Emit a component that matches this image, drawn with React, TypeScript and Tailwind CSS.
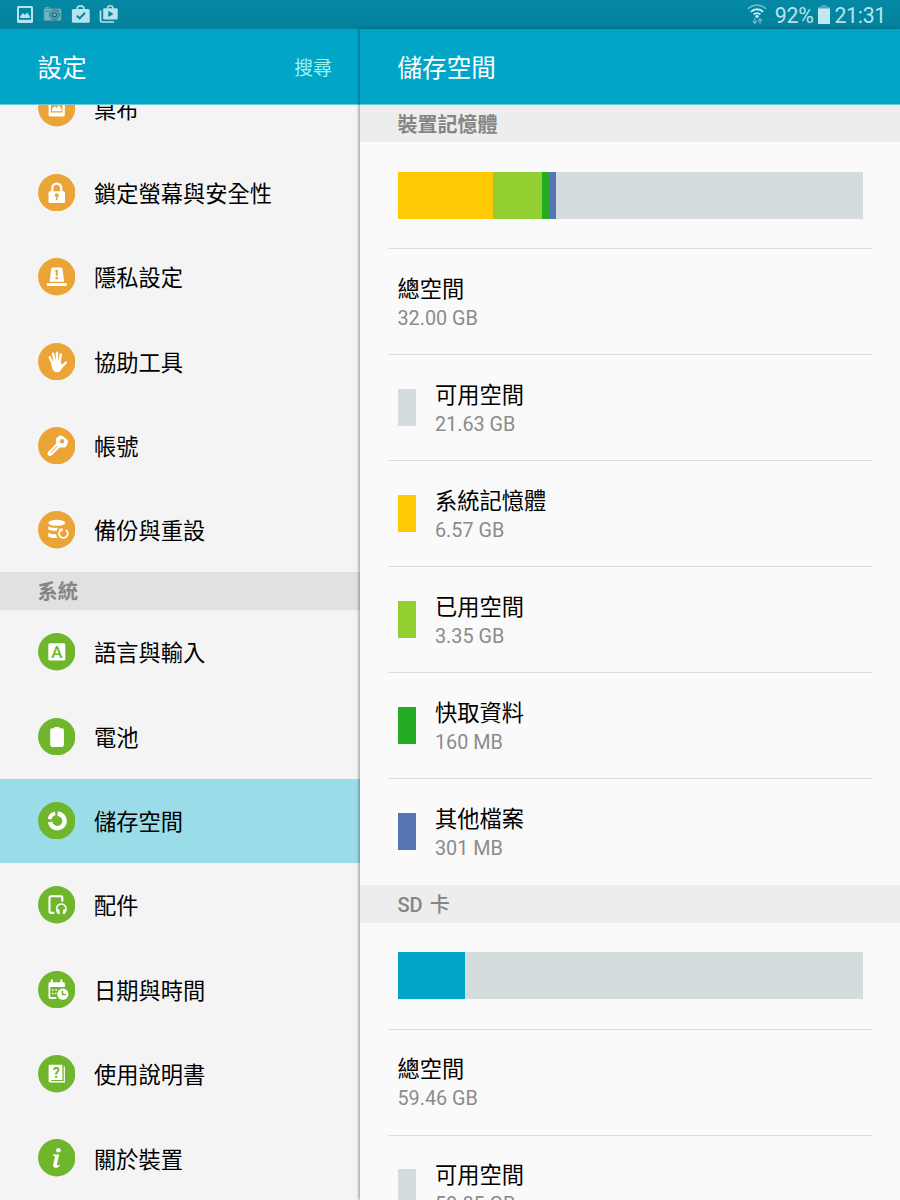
import React from "react";

interface MenuItem {
  label: string;
  icon: React.ReactNode;
  active?: boolean;
}

interface StorageItem {
  label: string;
  size: string;
  color?: string;
}

const PhotoIcon = () => (
  <>
    <path
      fillRule="evenodd"
      fill="#fff"
      d="M12 9.5h13.4a1.4 1.4 0 0 1 1.4 1.4v15.2a1.4 1.4 0 0 1-1.4 1.4H12a1.4 1.4 0 0 1-1.4-1.4V10.9a1.4 1.4 0 0 1 1.4-1.4zM12.9 11.7v11.8h11.6V11.7z"
    />
    <path fill="#fff" d="M14 22.3v-2l2.7-3.3 2 2.2 2-3.2 2.8 4v2.3z" />
  </>
);

const LockIcon = () => (
  <>
    <path d="M14.3 18v-4a4.45 4.45 0 0 1 8.9 0v4" fill="none" stroke="#fff" strokeWidth="2.3" />
    <rect x="10.5" y="17.3" width="16.5" height="11.7" rx="1.5" fill="#fff" />
    <circle cx="18.75" cy="21.3" r="2" fill="#eba536" />
    <path d="M18 22h1.5v4.3H18z" fill="#eba536" />
  </>
);

const AlarmIcon = () => (
  <>
    <path d="M11.6 23.7l1.5-12.3a2 2 0 0 1 2-1.9h7.5a2 2 0 0 1 2 1.900l1.500 12.300z" fill="#fff" />
    <rect x="8.900" y="25" width="19.900" height="2.900" rx=".6" fill="#fff" />
    <path d="M17.300 11.700h2.900l-.7 6.400h-1.500z" fill="#eba536" />
    <circle cx="18.750" cy="20.200" r="1.400" fill="#eba536" />
  </>
);

const HandIcon = () => (
  <>
    <path
      d="M11.700 14.300l3.300 7M15 10.600l2 9M19 9.700v9M22.800 11.400l-1.600 9M27.900 19.500l-4.400 4.500"
      stroke="#fff"
      strokeWidth="2.400"
      strokeLinecap="round"
    />
    <path d="M13.500 18.500l9-1.500 1.300 4.800 1.500 1.200-2.300 3.900c-1.300 2.200-3.700 2.800-5.700 2-2.200-.9-3-3.200-3.800-5.900z" fill="#fff" />
  </>
);

const KeyIcon = () => (
  <>
    <path
      d="M19.300 10.200l2.500-1.500c1-.4 2.100-.2 3 .4l4 3.300c1.300 1.200 1.400 2.400.9 3.600l-1.300 2.900c-.6 1-1.500 1.500-2.700 1.500l-4 .2-7.800 7.700c-1.200 1.100-2.700 1-3.700 0s-1-2.300 0-3.500l7.600-7.800.2-4.100c.1-1.200.4-2.100 1.300-2.700z"
      fill="#fff"
    />
    <circle cx="24.100" cy="14.300" r="2.200" fill="#eba536" />
    <path d="M12.700 25.700l6.400-6.400" stroke="#eba536" strokeWidth="1" strokeLinecap="round" />
  </>
);

const BackupIcon = () => (
  <>
    <ellipse cx="18.750" cy="11.800" rx="8.500" ry="3" fill="#fff" />
    <path d="M10.300 15.200c2.500 1.600 6 1.800 9.900 1.600-.7.700-1.200 1.600-1.500 2.900-3.500 0-6.400-.3-8.400-1.300z" fill="#fff" />
    <path d="M10.300 21.700c2.300 1.200 5 1.500 7.700 1.500.2 1.500.7 2.700 1.600 3.800-3.600.2-7-.1-9.300-1.500z" fill="#fff" />
    <path d="M22.900 18.900a4.400 4.400 0 1 0 4.900 0" fill="none" stroke="#fff" strokeWidth="1.800" />
    <path d="M20.800 17.700l4.200-.2-1.200 3.800z" fill="#fff" />
  </>
);

const LanguageIcon = () => (
  <>
    <rect x="10.300" y="10.200" width="17" height="17.300" rx="1.500" fill="#fff" />
    <text
      x="18.800"
      y="24.700"
      textAnchor="middle"
      fontFamily="Roboto, sans-serif"
      fontSize="17"
      fontWeight="500"
      fill="#70b62c"
    >
      A
    </text>
  </>
);

const BatteryIcon = () => (
  <path
    d="M16.300 9h5v1.300h2.800a1.800 1.800 0 0 1 1.800 1.800v15a1.800 1.800 0 0 1-1.800 1.800H14a1.800 1.800 0 0 1-1.800-1.800v-15a1.800 1.800 0 0 1 1.800-1.800h2.300z"
    fill="#fff"
  />
);

const StorageIcon = () => (
  <>
    <path d="M19.600 11.600a7.300 7.300 0 1 1-7.500 8.400" fill="none" stroke="#fff" strokeWidth="4.600" />
    <path d="M11.600 17.300a7 7 0 0 1 5.600-5.900" fill="none" stroke="#fff" strokeWidth="3.800" />
  </>
);

const AccessoryIcon = () => (
  <>
    <path
      d="M24.300 15.500v-4a1.200 1.200 0 0 0-1.200-1.200H12.700a1.200 1.200 0 0 0-1.200 1.200v14.200a1.200 1.200 0 0 0 1.200 1.200h3.500"
      fill="none"
      stroke="#fff"
      strokeWidth="2.100"
    />
    <path d="M19.300 26.500c-2.200-4.500.2-8.400 4-8.400s6.200 3.900 4 8.400" fill="none" stroke="#fff" strokeWidth="1.500" />
    <path d="M19 23.500l2.200-.3.700 4.500-2.300.3zM27.600 23.500l-2.200-.3-.7 4.500 2.300.3z" fill="#fff" />
  </>
);

const CalendarIcon = () => (
  <>
    <path d="M13.800 9.300v3M23.400 9.300v3" stroke="#fff" strokeWidth="2" strokeLinecap="round" />
    <path d="M11.700 11.200h14a1.200 1.200 0 0 1 1.200 1.200v3.500H10.500v-3.500a1.200 1.200 0 0 1 1.200-1.200z" fill="#fff" />
    <path d="M11.400 15v11a1 1 0 0 0 1 1h6" fill="none" stroke="#fff" strokeWidth="1.900" />
    <path d="M14 18.200h1.600v1.600H14zM17.300 18.200h1.600v1.600h-1.600zM14 21.700h1.600v1.600H14zM17 21.700h1.300v1.600H17z" fill="#fff" />
    <circle cx="24.800" cy="23.200" r="5.600" fill="#fff" />
    <path d="M24.500 19.700v3.900h3.500" fill="none" stroke="#70b62c" strokeWidth="1.500" />
  </>
);

const ManualIcon = () => (
  <>
    <path d="M11.700 9.800h12.700v15.300H13.200v.9h12.500V11.500h1.200v16H12.300a1.700 1.700 0 0 1-1.700-1.600V10.900a1.100 1.100 0 0 1 1.100-1.100z" fill="#fff" />
    <text
      x="18.300"
      y="22.500"
      textAnchor="middle"
      fontFamily="Roboto, sans-serif"
      fontSize="14"
      fontWeight="700"
      fill="#70b62c"
    >
      ?
    </text>
  </>
);

const InfoIcon = () => (
  <>
    <circle cx="20.400" cy="11.300" r="2.300" fill="#fff" />
    <path d="M15.200 15.600h6.100l-2.300 9.400c-.3 1.500.6 1.700 2.800.7l-.3 1.500c-3.600 2.600-7.100 1.700-6.300-1.600l1.800-7.400c.1-.8-.4-1-1.900-1.100z" fill="#fff" />
  </>
);

const personal: MenuItem[] = [
  { label: "桌布", icon: <PhotoIcon /> },
  { label: "鎖定螢幕與安全性", icon: <LockIcon /> },
  { label: "隱私設定", icon: <AlarmIcon /> },
  { label: "協助工具", icon: <HandIcon /> },
  { label: "帳號", icon: <KeyIcon /> },
  { label: "備份與重設", icon: <BackupIcon /> },
];

const system: MenuItem[] = [
  { label: "語言與輸入", icon: <LanguageIcon /> },
  { label: "電池", icon: <BatteryIcon /> },
  { label: "儲存空間", icon: <StorageIcon />, active: true },
  { label: "配件", icon: <AccessoryIcon /> },
  { label: "日期與時間", icon: <CalendarIcon /> },
  { label: "使用說明書", icon: <ManualIcon /> },
  { label: "關於裝置", icon: <InfoIcon /> },
];

const deviceItems: StorageItem[] = [
  { label: "總空間", size: "32.00 GB" },
  { label: "可用空間", size: "21.63 GB", color: "bg-[#d4dcde]" },
  { label: "系統記憶體", size: "6.57 GB", color: "bg-[#ffca05]" },
  { label: "已用空間", size: "3.35 GB", color: "bg-[#92d032]" },
  { label: "快取資料", size: "160 MB", color: "bg-[#24ad24]" },
  { label: "其他檔案", size: "301 MB", color: "bg-[#5575b5]" },
];

const sdItems: StorageItem[] = [
  { label: "總空間", size: "59.46 GB" },
  { label: "可用空間", size: "50.85 GB", color: "bg-[#d4dcde]" },
];

const StatusBar = () => (
  <div className="flex h-[29px] shrink-0 items-center justify-between bg-linear-to-b from-[#0489a4] to-[#03819c] pr-[14px] pl-4 text-[#b9e3ec]">
    <div className="flex items-center gap-[9px] pb-px">
      <svg width="18" height="19" viewBox="0 0 18 19" fill="currentColor">
        <path
          fillRule="evenodd"
          d="M2.500 1h13A1.500 1.500 0 0 1 17 2.500v14a1.500 1.500 0 0 1-1.500 1.500h-13A1.500 1.500 0 0 1 1 16.500v-14A1.500 1.500 0 0 1 2.500 1zM3 3v11.700h12V3z"
        />
        <path d="M4.200 13v-1.800L7 8l2 2 2-2.500 2.800 3.700V13z" />
      </svg>
      <svg width="19" height="16" viewBox="0 0 19 16">
        <path
          d="M1.500 2.500h16a.8.8 0 0 1 .8.800v10.700a.8.8 0 0 1-.8.800h-16a.8.8 0 0 1-.8-.8V3.300a.8.8 0 0 1 .8-.8z"
          fill="#70b7c6"
          stroke="#367f90"
          strokeWidth=".6"
        />
        <path d="M2 2.400V1.300h4.500v1.100z" fill="#70b7c6" />
        <path d="M2 5h5M12 4.300h5" stroke="#367f90" strokeWidth=".8" />
        <circle cx="11.500" cy="8.800" r="4.900" fill="#5ba6b6" stroke="#246f82" strokeWidth=".9" />
        <circle cx="11.500" cy="8.800" r="2.900" fill="#246f82" />
        <circle cx="11.500" cy="8.800" r="1.300" fill="#77bdc9" />
      </svg>
      <svg width="19" height="19" viewBox="0 0 19 19">
        <path d="M6.200 4.500V2.700l1.500-1.500h3.600l1.500 1.500v1.800" fill="none" stroke="currentColor" strokeWidth="1.700" />
        <rect x=".9" y="4" width="17.800" height="13.700" rx="1.500" fill="currentColor" />
        <path d="M6 10.700l2.700 2.700L14 7.700" fill="none" stroke="#04859f" strokeWidth="2" />
      </svg>
      <svg width="19" height="19" viewBox="0 0 19 19">
        <path d="M1.500 5.500v10a1.500 1.500 0 0 0 1.500 1.500h12" fill="none" stroke="currentColor" strokeWidth="1.700" />
        <path d="M8.700 3.500V2l1-1h3.100l1 1v1.500" fill="none" stroke="currentColor" strokeWidth="1.500" />
        <rect x="4.200" y="3.300" width="14.500" height="11.200" rx="1.200" fill="currentColor" />
        <path d="M9.300 5.800v6.200l5.200-3.100z" fill="#04859f" />
      </svg>
    </div>
    <div className="flex items-center font-['Roboto',sans-serif] text-[21.300px] leading-none">
      <svg width="20" height="21" viewBox="0 0 20 21" fill="none" className="mr-[8px]">
        <path d="M1 5a12.500 12.500 0 0 1 18 0" stroke="#6db8c8" strokeWidth="1.700" />
        <path d="M3.900 7.900a8.500 8.500 0 0 1 12.200 0M6.600 10.500a4.800 4.800 0 0 1 6.800 0" stroke="#cdeef3" strokeWidth="1.900" />
        <circle cx="10" cy="12.300" r="1.600" fill="#cdeef3" />
        <path d="M7.800 14v5M5.800 17l2 2.300 2-2.300M13 20v-5M11 17l2-2.300 2 2.300" stroke="#6db8c8" strokeWidth="1.300" />
      </svg>
      <span className="mt-[2px] tracking-[-0.300px]">92%</span>
      <svg width="12" height="19" viewBox="0 0 12 19" className="mr-[4px] ml-[5px]">
        <path d="M3 0h6v2h3v3H0V2h3z" fill="#4fa4b6" />
        <path d="M0 3.500h12V19H0z" fill="#c3e8ef" />
      </svg>
      <span className="mt-[2px] tracking-[-0.300px]">21:31</span>
    </div>
  </div>
);

const MenuRow = ({ item, color }: { item: MenuItem; color: string }) => (
  <div
    className={`flex h-[84.375px] shrink-0 items-center gap-[19px] pl-[37.500px] ${
      item.active ? "bg-[#9adce8]" : ""
    }`}
  >
    <svg width="37.500" height="37.500" viewBox="0 0 37.500 37.500" className="shrink-0">
      <circle cx="18.750" cy="18.750" r="18.700" fill={color} />
      {item.icon}
    </svg>
    <span className="pt-[3px] text-[22.250px] leading-none text-black">{item.label}</span>
  </div>
);

const StorageRow = ({ item }: { item: StorageItem }) => (
  <div className="mr-7 ml-[28px] flex h-[106px] shrink-0 items-center gap-[19px] border-t border-[#dcdcdc] pl-[9.500px]">
    {item.color && <div className={`h-[37.500px] w-[18.500px] shrink-0 ${item.color}`} />}
    <div className="pt-[3px]">
      <div className="text-[22.250px] leading-[31px] text-black">{item.label}</div>
      <div className="text-[19.800px] leading-[28px] text-[#8b8b8b]">{item.size}</div>
    </div>
  </div>
);

const App = () => {
  return (
    <div className="flex h-[1200px] w-[900px] flex-col overflow-hidden bg-[#f4f4f4] font-['Roboto','Noto_Sans_CJK_TC',sans-serif]">
      <StatusBar />
      <div className="flex min-h-0 flex-1">
        <div className="flex w-[360px] shrink-0 flex-col">
          <div className="flex h-[76px] shrink-0 items-center justify-between border-b border-[#6bc9dd] bg-[#00a5c8] pt-[5px] pr-[28px] pl-[37.500px]">
            <span className="text-[24.600px] leading-none text-white">設定</span>
            <span className="text-[18.900px] leading-none text-[#9cf3f0]">搜尋</span>
          </div>
          <div className="flex min-h-0 flex-1 flex-col overflow-hidden">
            <div className="-mt-[39px] flex flex-col">
              {personal.map((item) => (
                <MenuRow key={item.label} item={item} color="#eba536" />
              ))}
              <div className="flex h-[37.500px] shrink-0 items-center bg-[#e1e1e1] pt-[2px] pl-[37.500px] text-[20.300px] leading-none font-bold text-[#858585]">
                系統
              </div>
              {system.map((item) => (
                <MenuRow key={item.label} item={item} color="#70b62c" />
              ))}
            </div>
          </div>
        </div>

        <div className="z-10 flex min-w-0 flex-1 flex-col bg-[#fafafa] shadow-[-1px_0_3px_rgba(0,0,0,0.4)]">
          <div className="flex h-[76px] shrink-0 items-center border-b border-[#6bc9dd] bg-[#00a5c8] pt-[5px] pl-[37.500px]">
            <span className="text-[24.600px] leading-none text-white">儲存空間</span>
          </div>
          <div className="flex min-h-0 flex-1 flex-col overflow-hidden">
            <div className="flex h-[37px] shrink-0 items-center bg-[#ededed] pt-[3px] pl-[37.500px] text-xl leading-none font-bold text-[#858585]">
              裝置記憶體
            </div>
            <div className="flex h-[106px] shrink-0 items-center pr-[37px] pl-[37.500px]">
              <div className="flex h-[47px] w-full bg-[#d4dcde]">
                <div className="w-[95.500px] bg-[#ffca05]" />
                <div className="w-[48.500px] bg-[#92d032]" />
                <div className="w-[7.500px] bg-[#24ad24]" />
                <div className="w-[7px] bg-[#5575b5]" />
              </div>
            </div>
            {deviceItems.map((item) => (
              <StorageRow key={item.label} item={item} />
            ))}
            <div className="mt-px flex h-[37.500px] shrink-0 items-center bg-[#ededed] pt-[2px] pl-[37.500px] text-xl leading-none font-medium text-[#858585] [word-spacing:2px]">
              SD 卡
            </div>
            <div className="flex h-[106px] shrink-0 items-center pr-[37px] pl-[37.500px]">
              <div className="flex h-[47px] w-full bg-[#d4dcde]">
                <div className="w-[67.500px] bg-[#00a5c8]" />
              </div>
            </div>
            {sdItems.map((item) => (
              <StorageRow key={item.label} item={item} />
            ))}
          </div>
        </div>
      </div>
    </div>
  );
};

export default App;
